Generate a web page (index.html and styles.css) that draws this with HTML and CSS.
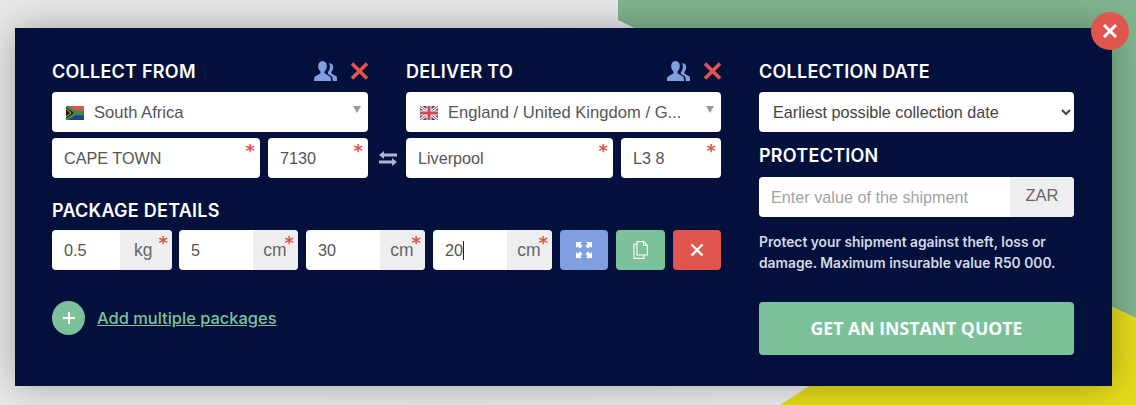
FILE: index.html
```html
<!DOCTYPE html>
<html lang="en">
<head>
    <meta charset="UTF-8">
    <title>Get a quote</title>
    <link rel="stylesheet" href="styles.css">
</head>
<body>
    <svg class="backdrop" width="1136" height="405" viewBox="0 0 1136 405" aria-hidden="true">
        <polygon points="618,0 1136,0 1136,318 1112,307 700,60 618,20" fill="#80b58f"/>
        <polygon points="780,405 1112,190 1112,307 1136,318 1136,405" fill="#e6db1a"/>
    </svg>

    <div class="panel">
        <button class="close-panel" aria-label="Close">
            <svg width="16" height="16" viewBox="0 0 16 16"><path d="M2 2l12 12M14 2L2 14" stroke="#fff" stroke-width="3"/></svg>
        </button>

        <div class="left-col">
            <div class="route">
                <div class="route-side">
                    <div class="heading-row">
                        <h2 class="heading">COLLECT FROM</h2>
                        <div class="heading-icons">
                            <svg width="24" height="20" viewBox="0 0 24 20"><use href="#users"/></svg>
                            <svg width="19" height="18" viewBox="0 0 19 18"><use href="#cross"/></svg>
                        </div>
                    </div>
                    <div class="country-select">
                        <svg class="flag" width="18" height="14" viewBox="0 0 18 14">
                            <rect width="18" height="7" fill="#d9594c"/>
                            <rect y="7" width="18" height="7" fill="#23408f"/>
                            <path d="M0 0l8 7-8 7" fill="#1c1c1c"/>
                            <path d="M0 0l9 6h9v2H9l-9 6" fill="none" stroke="#3b8a4c" stroke-width="2.4"/>
                            <path d="M0 3l5 4-5 4" fill="none" stroke="#e6b83a" stroke-width="1"/>
                        </svg>
                        <span class="country-name">South Africa</span>
                    </div>
                    <div class="address-row">
                        <div class="field"><input type="text" value="CAPE TOWN"><span class="required">*</span></div>
                        <div class="field postcode"><input type="text" value="7130"><span class="required">*</span></div>
                    </div>
                </div>

                <div class="swap">
                    <svg width="18" height="15" viewBox="0 0 18 15" fill="#a9b7d6">
                        <path d="M0 4l5-4v2.6h13v2.8H5V8z"/>
                        <path d="M18 11l-5-4v2.6H0v2.8h13V15z"/>
                    </svg>
                </div>

                <div class="route-side">
                    <div class="heading-row">
                        <h2 class="heading">DELIVER TO</h2>
                        <div class="heading-icons">
                            <svg width="24" height="20" viewBox="0 0 24 20"><use href="#users"/></svg>
                            <svg width="19" height="18" viewBox="0 0 19 18"><use href="#cross"/></svg>
                        </div>
                    </div>
                    <div class="country-select">
                        <svg class="flag" width="18" height="14" viewBox="0 0 18 14">
                            <rect width="18" height="14" fill="#3a4a80"/>
                            <path d="M0 0l18 14M18 0L0 14" stroke="#f3f3f3" stroke-width="3"/>
                            <path d="M0 0l18 14M18 0L0 14" stroke="#d04a55" stroke-width="1"/>
                            <path d="M9 0v14M0 7h18" stroke="#f3f3f3" stroke-width="5"/>
                            <path d="M9 0v14M0 7h18" stroke="#d04a55" stroke-width="3"/>
                        </svg>
                        <span class="country-name">England / United Kingdom / G...</span>
                    </div>
                    <div class="address-row">
                        <div class="field"><input type="text" value="Liverpool"><span class="required">*</span></div>
                        <div class="field postcode"><input type="text" value="L3 8"><span class="required">*</span></div>
                    </div>
                </div>
            </div>

            <h2 class="heading package-heading">PACKAGE DETAILS</h2>
            <div class="package-row">
                <div class="field unit-field"><input type="text" value="0.5"><span class="unit kg">kg</span><span class="required">*</span></div>
                <div class="field unit-field"><input type="text" value="5"><span class="unit">cm</span><span class="required">*</span></div>
                <div class="field unit-field"><input type="text" value="30"><span class="unit">cm</span><span class="required">*</span></div>
                <div class="field unit-field"><input type="text" value="20"><span class="caret"></span><span class="unit">cm</span><span class="required">*</span></div>
                <button class="icon-button blue" aria-label="Dimensions">
                    <svg width="16" height="16" viewBox="0 0 16 16" fill="#fff">
                        <path d="M0 0h6L4.300 1.700 6.500 3.900 3.900 6.500 1.700 4.300 0 6z"/>
                        <path d="M16 0v6L14.300 4.300 12.100 6.500 9.500 3.900 11.700 1.700 10 0z"/>
                        <path d="M0 16v-6l1.700 1.700 2.200-2.200 2.600 2.600-2.200 2.200L6 16z"/>
                        <path d="M16 16h-6l1.700-1.700-2.200-2.200 2.600-2.600 2.200 2.200L16 10z"/>
                    </svg>
                </button>
                <button class="icon-button green" aria-label="Copy">
                    <svg width="15" height="18" viewBox="0 0 15 18" fill="none" stroke="#fff" stroke-width="1.1">
                        <path d="M4 .6h6.500L14.400 4.500V14H4z"/>
                        <path d="M10.500.6v3.900h3.900"/>
                        <path d="M4 3H1v14.400h10V14"/>
                    </svg>
                </button>
                <button class="icon-button red" aria-label="Remove">
                    <svg width="14" height="14" viewBox="0 0 14 14"><path d="M1.500 1.500l11 11M12.500 1.500l-11 11" stroke="#fff" stroke-width="2.400"/></svg>
                </button>
            </div>

            <div class="add-row">
                <span class="add-circle">
                    <svg width="14" height="14" viewBox="0 0 14 14"><path d="M7 1v12M1 7h12" stroke="#fff" stroke-width="2"/></svg>
                </span>
                <a class="add-link" href="#">Add multiple packages</a>
            </div>
        </div>

        <div class="right-col">
            <h2 class="heading heading-single">COLLECTION DATE</h2>
            <select class="date-select">
                <option>Earliest possible collection date</option>
            </select>
            <h2 class="heading protection-heading">PROTECTION</h2>
            <div class="field protection-field">
                <input type="text" placeholder="Enter value of the shipment">
                <span class="unit currency">ZAR</span>
            </div>
            <p class="note">Protect your shipment against theft, loss or damage. Maximum insurable value R50 000.</p>
            <button class="quote-button">GET AN INSTANT QUOTE</button>
        </div>
    </div>

    <!-- shared icons -->
    <svg width="0" height="0" class="icon-defs" aria-hidden="true">
        <defs>
            <g id="users" fill="#7f9fe0">
                <path d="M8.500 0c2.800 0 4.300 2.200 4.300 5 0 2.300-.9 4.400-2.300 5.500v1.700l5.500 3.300c.8.500 1 2 1 4.500H0c0-2.500.2-4 1-4.500l5.500-3.300v-1.700C5.100 9.400 4.200 7.300 4.200 5 4.200 2.200 5.700 0 8.500 0z"/>
                <path d="M14.300 2.500c2.500-.7 4.900.6 4.900 3.800 0 2-.7 3.700-1.800 4.700v1.500l5.200 3c.5.300.4 2.500.4 4.500h-4.300c0-2.500-.2-4.300-1.400-5l-3.500-2.100v-1.500c1.300-1.400 2.100-3.700 2.100-5.800 0-1.200-.2-2.100-.6-3.100z"/>
            </g>
            <path id="cross" d="M2 1.500l15 15M17 1.500l-15 15" stroke="#e0564f" stroke-width="3.600" fill="none"/>
        </defs>
    </svg>
</body>
</html>
```

FILE: styles.css
```css
* {
    box-sizing: border-box;
}

body {
    margin: 0;
    width: 1136px;
    height: 405px;
    overflow: hidden;
    position: relative;
    padding: 28px 24px 19px 15px;
    background: linear-gradient(90deg, #e9e9e9 0%, #e6e8ea 50%, #f2f3f4 100%);
    font-family: "Liberation Sans", Arial, sans-serif;
}

.backdrop {
    position: absolute;
    top: 0;
    left: 0;
}

.icon-defs {
    position: absolute;
}

.panel {
    position: relative;
    display: flex;
    gap: 38px;
    width: 1097px;
    height: 358px;
    padding: 33px 38px 0 37px;
    background-color: #03103c;
    box-shadow: 0 0 34px rgba(0, 0, 0, 0.3);
}

.close-panel {
    position: absolute;
    top: -16px;
    right: -17px;
    width: 38px;
    height: 38px;
    border: none;
    border-radius: 50%;
    background-color: #e0564f;
    display: flex;
    justify-content: center;
    align-items: center;
    padding: 0;
}

.left-col {
    width: 669px;
}

.right-col {
    width: 315px;
}

.route {
    display: grid;
    grid-template-columns: 316px 38px 315px;
}

.swap {
    height: 40px;
    margin-top: 77px;
    padding-left: 1px;
    display: flex;
    justify-content: center;
    align-items: center;
}

.heading-row {
    display: flex;
    justify-content: space-between;
    align-items: center;
    height: 21px;
    margin-bottom: 10px;
}

.heading-icons {
    display: flex;
    align-items: center;
    gap: 12px;
    margin-right: -1px;
    margin-top: -2px;
}

.heading {
    margin: 0;
    padding-top: 1px;
    font-family: Inter, sans-serif;
    font-size: 18px;
    font-weight: 600;
    line-height: 20px;
    letter-spacing: 0.25px;
    color: #fff;
}

.heading-single {
    margin-bottom: 10px;
}

.package-heading {
    margin-top: 22px;
    margin-bottom: 9px;
}

.protection-heading {
    margin-top: 13px;
    margin-bottom: 11px;
}

.country-select {
    position: relative;
    display: flex;
    align-items: center;
    height: 40px;
    padding-left: 14px;
    padding-top: 1px;
    background-color: #fff;
    border-radius: 4px;
    color: #555;
    font-size: 16.600px;
}

.country-select::after {
    content: "";
    position: absolute;
    top: 14px;
    right: 7px;
    border-left: 4px solid transparent;
    border-right: 4px solid transparent;
    border-top: 7px solid #999;
}

.country-name {
    margin-left: 10px;
}

.address-row {
    display: flex;
    gap: 8px;
    margin-top: 6px;
}

.field {
    position: relative;
    display: flex;
    flex: 1;
    height: 40px;
    background-color: #fff;
    border-radius: 4px;
    overflow: hidden;
}

.postcode {
    flex: 0 0 100px;
}

.field input {
    flex: 1;
    width: 100%;
    min-width: 0;
    padding: 1px 12px 0;
    border: none;
    outline: none;
    background: none;
    font-family: "Liberation Sans", Arial, sans-serif;
    font-size: 16.200px;
    color: #555;
}

.field input::placeholder {
    color: #a3a3a3;
}

.protection-field input {
    padding-top: 0;
}

.required {
    position: absolute;
    top: 4px;
    right: 5px;
    font-family: "DejaVu Sans", sans-serif;
    font-size: 18px;
    font-weight: 700;
    line-height: 18px;
    color: #e0564f;
}

.package-row {
    display: grid;
    grid-template-columns: repeat(4, 119px) 48px 49px 48px;
    gap: 8px;
}

.package-row .field:first-child {
    margin-right: -1px;
}

.unit {
    flex: 0 0 45px;
    display: flex;
    justify-content: center;
    align-items: center;
    padding-right: 1px;
    background-color: #eee;
    font-size: 17.500px;
    color: #666;
}

.unit.kg {
    flex-basis: 52px;
    padding-left: 14px;
    padding-right: 0;
    justify-content: flex-start;
}

.unit.currency {
    flex-basis: 64px;
    padding-right: 0;
    padding-bottom: 3px;
    font-size: 16.500px;
}

.unit-field .required {
    top: 4px;
    right: 4px;
}

.caret {
    position: absolute;
    top: 11px;
    left: 30px;
    width: 1px;
    height: 19px;
    background-color: #222;
}

.icon-button {
    height: 40px;
    border: none;
    border-radius: 4px;
    padding: 0;
    display: flex;
    justify-content: center;
    align-items: center;
}

.icon-button.blue {
    background-color: #7f9fe0;
}

.icon-button.green {
    background-color: #7bc29a;
}

.icon-button.red {
    background-color: #e0564f;
}

.add-row {
    display: flex;
    align-items: center;
    gap: 12px;
    margin-top: 31px;
}

.add-circle {
    width: 33px;
    height: 34px;
    border-radius: 50%;
    background-color: #7bc29a;
    display: flex;
    justify-content: center;
    align-items: center;
}

.add-link {
    font-family: Inter, sans-serif;
    font-size: 16.450px;
    font-weight: 500;
    color: #7bc29a;
}

.date-select {
    display: block;
    width: 100%;
    height: 40px;
    padding: 0 10px;
    border: none;
    border-radius: 4px;
    background-color: #fff;
    font-family: "Liberation Sans", Arial, sans-serif;
    font-size: 16.200px;
    color: #444;
}

.protection-field {
    flex: none;
}

.note {
    margin: 15px 0 0;
    font-family: Inter, sans-serif;
    font-size: 13.800px;
    font-weight: 600;
    line-height: 21px;
    color: #d3d8e6;
}

.quote-button {
    display: block;
    width: 100%;
    height: 53px;
    margin-top: 28px;
    padding-bottom: 2px;
    border: none;
    border-radius: 4px;
    background-color: #7bc29a;
    font-family: "Open Sans", sans-serif;
    font-size: 17.700px;
    font-weight: 700;
    color: #fff;
}
```
